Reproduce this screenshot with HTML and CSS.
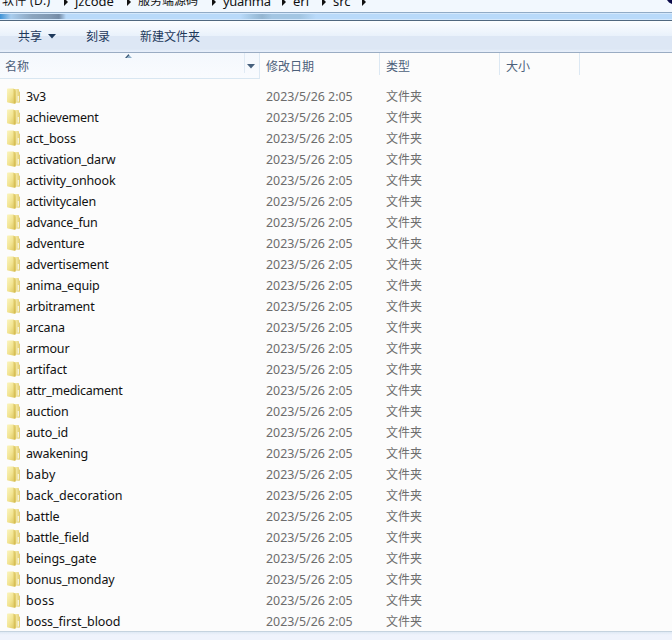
FILE: index.html
```html
<!DOCTYPE html>
<html lang="zh-CN">
<head>
<meta charset="utf-8">
<title>src</title>
<link rel="stylesheet" href="styles.css">
</head>
<body>
<div class="window">
  <nav class="address">
    <span class="crumb drive">软件 (D:)</span><i class="sep"></i>
    <span class="crumb jz">jzcode</span><i class="sep"></i>
    <span class="crumb server">服务端源码</span><i class="sep"></i>
    <span class="crumb yuanma">yuanma</span><i class="sep"></i>
    <span class="crumb erl">erl</span><i class="sep"></i>
    <span class="crumb src">src</span><i class="sep"></i>
    <svg class="corner" width="8" height="5" viewBox="0 0 8 5"><path d="M3 0H8V4L5 2.5Z" fill="#0b0b4a"/></svg>
  </nav>
  <div class="strip"></div>
  <div class="toolbar">
    <span class="tool share">共享<svg width="8" height="5" viewBox="0 0 8 5"><path d="M0 0H8L4 4.6Z" fill="#1e395b"/></svg></span>
    <span class="tool burn">刻录</span>
    <span class="tool">新建文件夹</span>
  </div>
  <div class="heads">
    <div class="head name"><span>名称</span>
      <svg class="sort" width="7" height="4" viewBox="0 0 7 4"><path d="M0 4L3.5 0L4.5 1.5L2 4Z" fill="#3f5f7d"/><path d="M2 4L4.5 1.5L7 4Z" fill="#8fb0ca"/></svg>
      <b class="drop"><svg width="8" height="5" viewBox="0 0 8 5"><path d="M0 0H8L4 4.4Z" fill="#46607d"/></svg></b>
    </div>
    <div class="head date">修改日期</div>
    <div class="head type">类型</div>
    <div class="head size">大小</div>
  </div>
  <div class="list" id="list"></div>
  <div class="footer"></div>
</div>
<svg class="defs" width="0" height="0">
  <defs>
    <linearGradient id="front" x1="0" x2="1" y1="0" y2="1"><stop offset="0" stop-color="#fbf5c0"/><stop offset=".5" stop-color="#f2e492"/><stop offset="1" stop-color="#d9c155"/></linearGradient>
    <linearGradient id="back" x1="0" x2="1"><stop offset="0" stop-color="#c9ad45"/><stop offset=".5" stop-color="#f4e8a2"/><stop offset="1" stop-color="#dfca70"/></linearGradient>
  </defs>
  <symbol id="folder" viewBox="0 0 14 16">
    <path d="M5 1H11.2Q12 1 12 1.9V3.5H12.5Q13 3.5 13 4.2V14Q13 14.7 12.3 14.7H5Z" fill="url(#back)"/>
    <path d="M10.6 8H12V13.6H10.6Z" fill="#f7f3dd"/>
    <path d="M0 1.1Q0 .5.8.5H6.4L8.6 2.5V15.4L7.4 15.8L.8 14.6Q0 14.5 0 13.8Z" fill="url(#front)"/>
    <path d="M6.4 .6L8.6 2.5V15.3L6.9 15.6Z" fill="#cdb142" opacity=".5"/>
  </symbol>
</svg>
<script src="list.js"></script>
</body>
</html>
```

FILE: styles.css
```css
* { box-sizing: border-box; }
body { margin: 0; background: #fcfcfc; overflow: hidden; font: 12px "Noto Sans", "Noto Sans CJK SC", sans-serif; }
.window { width: 672px; height: 640px; display: flex; flex-direction: column; overflow: hidden; }
.window > * { flex: none; }
.defs { position: absolute; }
.address { position: relative; height: 12px; display: flex; align-items: flex-start; overflow: hidden; background: #f2f8fe; color: #111; font-size: 13px; padding-left: 2px; }
.crumb { flex: none; margin-top: -8px; line-height: 18px; white-space: nowrap; }
.drive { width: 62px; letter-spacing: .3px; }
.jz { width: 52px; }
.server { width: 74px; }
.server, .drive { font-size: 12px; }
.yuanma { width: 59px; letter-spacing: -.3px; }
.erl { width: 29px; }
.src { width: 29px; }
.sep { flex: none; width: 0; height: 7px; margin: -2px 7px 0 0; border-left: 4px solid #111; border-top: 4px solid transparent; border-bottom: 4px solid transparent; }
.corner { position: absolute; right: 0; top: 0; }
.strip { height: 9px; border-top: 1px solid #91abc6; border-bottom: 1px solid #50687f; background: linear-gradient(#d4e8fc 0 1px, transparent 1px 6px, #d4e8fc 6px), linear-gradient(90deg, #3f93d6 0, #a9cdee 11px, #9cbbd9 20px, #8ba5bf 32px, #8199b3 50px, #748ba6 59px, #b9dafa 66px, #b9dafa 240px, #a3c6e3 252px, #94b6d2 262px, #a3c6e3 272px, #a3c6e3 300px, #b9dafa 316px); }
.toolbar { height: 32px; display: flex; align-items: center; padding-left: 18px; color: #1e395b; background: linear-gradient(#fcfeff 0, #e9f1fb 15px, #dde7f5 15px, #dde7f5 28px, #e6eefa 30px); border-bottom: 1px solid #9aacc3; }
.tool { white-space: nowrap; line-height: 18px; }
.share { width: 68px; }
.share svg { margin-left: 6px; vertical-align: 2px; }
.burn { width: 54px; }
.heads { height: 26px; display: flex; color: #4c607a; }
.head { height: 22px; border-right: 1px solid #dce8f3; line-height: 28px; padding-left: 6px; }
.name { position: relative; width: 260px; height: 26px; padding-left: 5px; border-bottom: 1px solid #d8e6f1; background: linear-gradient(#f4f8fd, #f9fbfe); }
.date, .type { width: 120px; }
.size { width: 80px; }
.sort { position: absolute; left: 125px; top: 1px; }
.drop { position: absolute; right: 0; top: 0; width: 15px; height: 20px; border-left: 1px solid #e0eaf4; }
.drop svg { position: absolute; left: 2px; top: 11px; }
.list { height: 552px; padding-top: 7px; overflow: hidden; }
.row { height: 21px; display: flex; align-items: center; line-height: 21px; color: #6d6d6d; white-space: nowrap; }
.folder { flex: none; width: 14px; height: 16px; margin: -1px 5px 0 7px; }
.filename { width: 240px; font-size: 12.5px; color: #111; }
.modified { width: 120px; font-size: 12.4px; }
.footer { height: 9px; border-top: 1px solid #c5d3df; background: linear-gradient(#dfe9f4, #eff3fc 3px); }
```

FILE: list.js
```js
// Each entry: folder name and the width its label spans, in pixels.
const folders = [["3v3", 20], ["achievement", 72.5], ["act_boss", 50], ["activation_darw", 89.5], ["activity_onhook", 89.5], ["activitycalen", 70], ["advance_fun", 71.5], ["adventure", 58.5], ["advertisement", 82.5], ["anima_equip", 73.5], ["arbitrament", 68.5], ["arcana", 39], ["armour", 43.5], ["artifact", 41], ["attr_medicament", 96.5], ["auction", 42.5], ["auto_id", 42], ["awakening", 62], ["baby", 29.5], ["back_decoration", 96.5], ["battle", 33.5], ["battle_field", 63], ["beings_gate", 70.5], ["bonus_monday", 88.5], ["boss", 28.5], ["boss_first_blood", 94.5]];
const list = document.getElementById("list");
list.innerHTML = folders.map(([name]) => `
  <div class="row">
    <svg class="folder"><use href="#folder"/></svg>
    <span class="filename"><span>${name}</span></span>
    <span class="modified">2023/5/26 2:05</span>
    <span class="kind">文件夹</span>
  </div>`).join("");
list.querySelectorAll(".filename > span").forEach((label, i) => {
  const [name, width] = folders[i];
  label.style.letterSpacing = (width - label.getBoundingClientRect().width) / name.length + "px";
});
```
